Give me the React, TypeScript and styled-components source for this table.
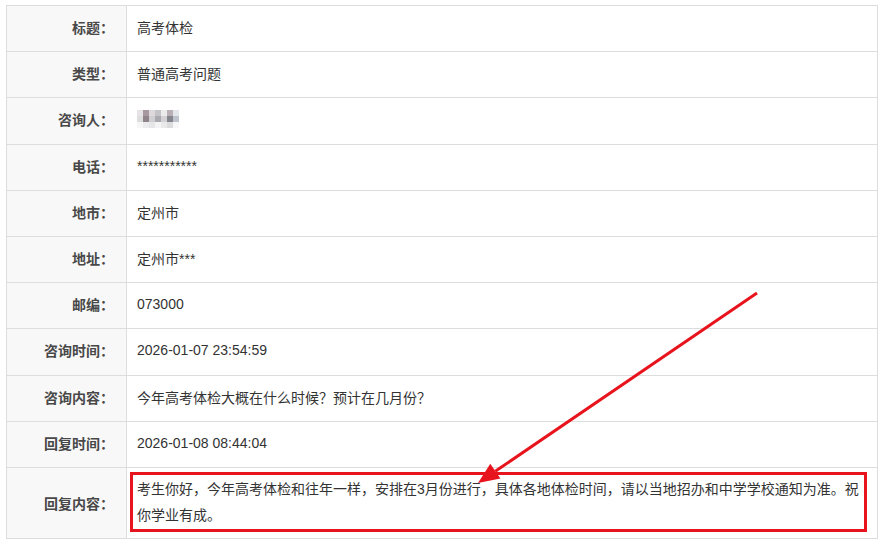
import styled, { createGlobalStyle } from "styled-components";

const GlobalStyle = createGlobalStyle`
  html, body {
    margin: 0;
    padding: 0;
    background: #fff;
  }
  body {
    font-family: "Liberation Sans", "Noto Sans CJK SC", Arial, sans-serif;
    font-size: 14px;
    color: #333;
  }
`;

const Page = styled.div`
  position: relative;
  width: 883px;
  height: 542px;
  padding: 5px 0 0 6px;
  box-sizing: border-box;
  overflow: hidden;
`;

const Table = styled.table`
  width: 872px;
  border-collapse: collapse;
  table-layout: fixed;
  border: 1px solid #ddd;
`;

const Row = styled.tr<{ $tall?: boolean }>`
  height: ${(p) => (p.$tall ? "71px" : "46.2px")};
`;

const LabelCell = styled.th<{ $tall?: boolean }>`
  width: 107px;
  padding: ${(p) => (p.$tall ? "0 12px 0 0" : "0 12px 3px 0")};
  text-align: right;
  vertical-align: middle;
  background: #f8f8f8;
  border: 1px solid #ddd;
  font-weight: bold;
  color: #484848;
  white-space: nowrap;
`;

const ValueCell = styled.td<{ $boxed?: boolean }>`
  padding: ${(p) => (p.$boxed ? "4px 10px 5px 3px" : "0 10px 3px")};
  vertical-align: middle;
  border: 1px solid #ddd;
  color: #333;
`;

const Highlight = styled.div`
  border: 3px solid #e8141d;
  padding: 1px 0 1px 4px;
  line-height: 26px;
`;

const Mosaic = styled.div`
  display: grid;
  grid-template-columns: repeat(7, 6px);
  grid-auto-rows: 6px;
  width: 42px;
`;

const Pixel = styled.span<{ $c: string }>`
  background: ${(p) => p.$c};
`;

const Overlay = styled.svg`
  position: absolute;
  left: 0;
  top: 0;
  pointer-events: none;
`;

const rows: [string, string][] = [
  ["标题：", "高考体检"],
  ["类型：", "普通高考问题"],
  ["咨询人：", ""],
  ["电话：", "***********"],
  ["地市：", "定州市"],
  ["地址：", "定州市***"],
  ["邮编：", "073000"],
  ["咨询时间：", "2026-01-07 23:54:59"],
  ["咨询内容：", "今年高考体检大概在什么时候？预计在几月份？"],
  ["回复时间：", "2026-01-08 08:44:04"],
];

const mosaicColors = [
  "#e6e3e6", "#a8989f", "#dcd8db", "#c4c4c8", "#ebebec", "#b9b0b5", "#e3e6ea",
  "#dedede", "#8f8489", "#cfcfd3", "#a9a9af", "#d4d1d4", "#85858d", "#bfc4cc",
  "#f6f6f6", "#ececee", "#e6e6e8", "#f4f4f4", "#e9e9e9", "#dcdcdf", "#f7f7f7",
];

function Blurred() {
  return (
    <Mosaic>
      {mosaicColors.map((c, i) => (
        <Pixel key={i} $c={c} />
      ))}
    </Mosaic>
  );
}

// arrow drawn from upper right down to the reply box
const tip = { x: 478, y: 483 };
const tail = { x: 757, y: 293 };
const dx = tip.x - tail.x;
const dy = tip.y - tail.y;
const len = Math.hypot(dx, dy);
const ux = dx / len;
const uy = dy / len;
const headLen = 21;
const halfW = 9;
const bx = tip.x - ux * headLen;
const by = tip.y - uy * headLen;
const head = `${tip.x},${tip.y} ${bx - uy * halfW},${by + ux * halfW} ${bx + uy * halfW},${by - ux * halfW}`;

export default function App() {
  return (
    <Page>
      <GlobalStyle />
      <Table>
        <tbody>
          {rows.map(([label, value]) => (
            <Row key={label}>
              <LabelCell>{label}</LabelCell>
              <ValueCell>{label === "咨询人：" ? <Blurred /> : value}</ValueCell>
            </Row>
          ))}
          <Row $tall>
            <LabelCell $tall>回复内容：</LabelCell>
            <ValueCell $boxed>
              <Highlight>
                考生你好，今年高考体检和往年一样，安排在3月份进行，具体各地体检时间，请以当地招办和中学学校通知为准。祝你学业有成。
              </Highlight>
            </ValueCell>
          </Row>
        </tbody>
      </Table>
      <Overlay width="883" height="542" viewBox="0 0 883 542">
        <line x1={tail.x} y1={tail.y} x2={bx} y2={by} stroke="#e8141d" strokeWidth="3" />
        <polygon points={head} fill="#e8141d" />
      </Overlay>
    </Page>
  );
}
